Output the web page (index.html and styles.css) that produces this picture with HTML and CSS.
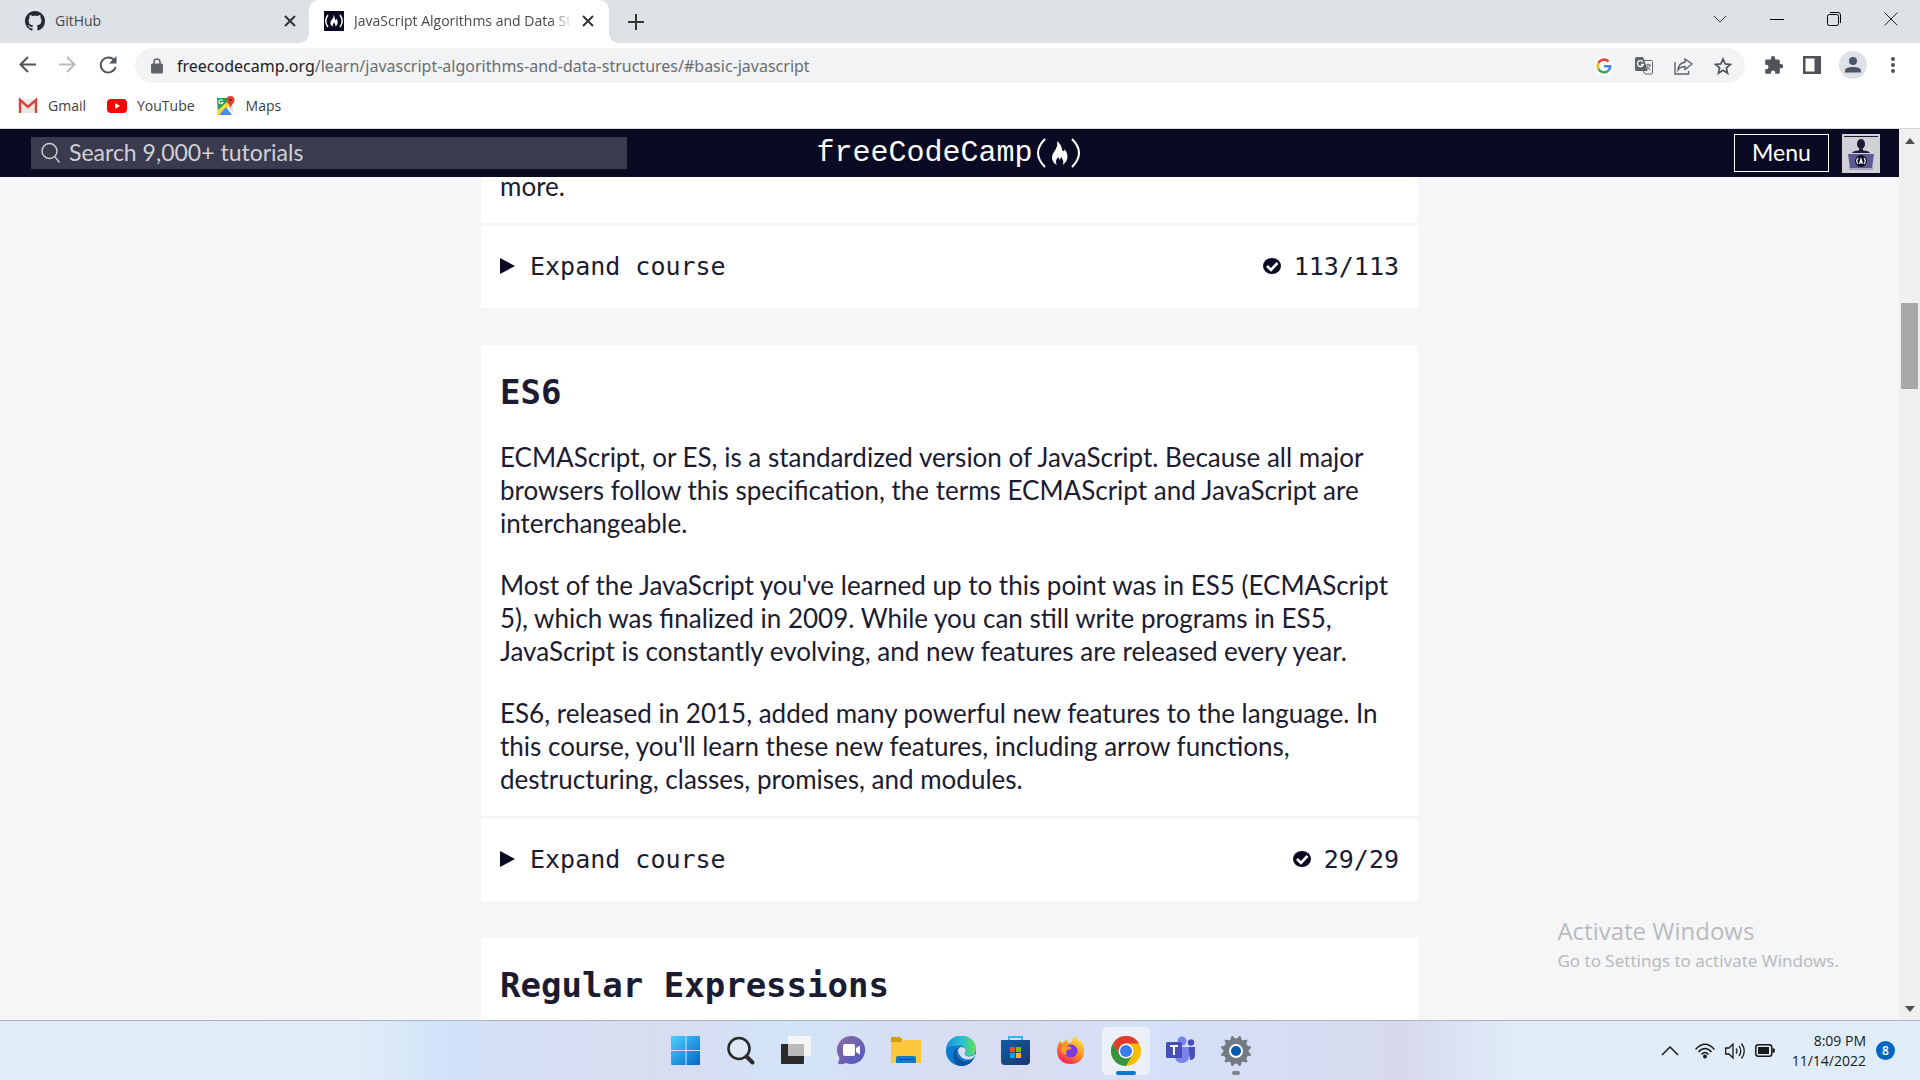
FILE: index.html
```html
<!DOCTYPE html>
<html lang="en">
<head>
<meta charset="utf-8">
<title>JavaScript Algorithms and Data Structures</title>
<link rel="stylesheet" href="styles.css">
</head>
<body>
<div class="screen">
  <div class="tabstrip">
    <div class="tab">
      <svg class="ico20" viewBox="0 0 16 16" fill="#24292f"><path d="M8 0C3.58 0 0 3.58 0 8c0 3.54 2.29 6.53 5.47 7.59.4.07.55-.17.55-.38 0-.19-.01-.82-.01-1.49-2.01.37-2.53-.49-2.69-.94-.09-.23-.48-.94-.82-1.13-.28-.15-.68-.52-.01-.53.63-.01 1.08.58 1.23.82.72 1.21 1.87.87 2.33.66.07-.52.28-.87.51-1.07-1.78-.2-3.64-.89-3.64-3.95 0-.87.31-1.59.82-2.15-.08-.2-.36-1.02.08-2.12 0 0 .67-.21 2.2.82.64-.18 1.32-.27 2-.27s1.36.09 2 .27c1.53-1.04 2.2-.82 2.2-.82.44 1.1.16 1.92.08 2.12.51.56.82 1.27.82 2.15 0 3.07-1.87 3.75-3.65 3.95.29.25.54.73.54 1.48 0 1.07-.01 1.93-.01 2.2 0 .21.15.46.55.38A8.01 8.01 0 0 0 16 8c0-4.42-3.58-8-8-8z"/></svg>
      <span class="tab-title">GitHub</span>
      <button class="plain" aria-label="Close tab"><svg width="12" height="12" viewBox="0 0 12 12" stroke="#333" stroke-width="2"><path d="M1 1l10 10M11 1L1 11"/></svg></button>
    </div>
    <div class="tab tab-active">
      <svg class="ico20" viewBox="0 0 20 20"><path fill="#0a0a23" d="M0 0h20v20H0z"/><path fill="none" stroke="#fff" stroke-width="1.4" d="M4 4Q-.5 10 4 16M16 4q4.500 6 0 12"/><path fill="#fff" d="M9.500 4c2 2 .5 4 2.200 5 .6-.5.500-1 .500-1.500 1.800 2 2.400 6-.9 8 .5-2-.5-3-1.300-4-.8 1.500-1.600 2-1 4-4-2-2.600-5-1-7 1.200-1.500 1.700-2.500 1.500-4.500z"/></svg>
      <span class="tab-title fade">JavaScript Algorithms and Data Structures</span>
      <button class="plain" aria-label="Close tab"><svg width="12" height="12" viewBox="0 0 12 12" stroke="#333" stroke-width="2"><path d="M1 1l10 10M11 1L1 11"/></svg></button>
    </div>
    <button class="plain newtab" aria-label="New tab"><svg width="16" height="16" viewBox="0 0 16 16" stroke="#333" stroke-width="2"><path d="M8 0v16M0 8h16"/></svg></button>
    <div class="winctl">
      <button class="plain" aria-label="Search tabs"><svg width="14" height="14" viewBox="0 0 14 14" fill="none" stroke="#333"><path d="M1 4l6 6 6-6"/></svg></button>
      <button class="plain" aria-label="Minimize"><svg width="14" height="14" viewBox="0 0 14 14" stroke="#000"><path d="M0 7.500h14"/></svg></button>
      <button class="plain" aria-label="Restore"><svg width="14" height="14" viewBox="0 0 14 14" fill="none" stroke="#000"><rect x=".5" y="2.500" width="11" height="11" rx="2"/><path d="M3 .5h8q2.500 0 2.500 2.500v8"/></svg></button>
      <button class="plain" aria-label="Close"><svg width="14" height="14" viewBox="0 0 14 14" stroke="#222"><path d="M.5.5l13 13M13.500.5l-13 13"/></svg></button>
    </div>
  </div>

  <div class="toolbar">
    <button class="plain" aria-label="Back"><svg width="17" height="17" viewBox="0 0 17 17" fill="none" stroke="#505357" stroke-width="2"><path d="M17 8.500H2M9 1L1.500 8.500 9 16"/></svg></button>
    <button class="plain" aria-label="Forward"><svg width="17" height="17" viewBox="0 0 17 17" fill="none" stroke="#b9bbbe" stroke-width="2"><path d="M0 8.500h15M8 1l7.500 7.500L8 16"/></svg></button>
    <button class="plain" aria-label="Reload"><svg width="18" height="18" viewBox="0 0 18 18" fill="none" stroke="#505357" stroke-width="2"><path d="M15.500 4.800A7.500 7.500 0 1 0 16.500 11"/><path fill="#505357" stroke="none" d="M17.500 0v7.500H10z"/></svg></button>
    <div class="omnibox">
      <svg width="12" height="16" viewBox="0 0 12 16"><path fill="#5f6368" d="M1.500 5.500h9Q12 5.500 12 7v7q0 1.500-1.500 1.500h-9Q0 15.500 0 14V7q0-1.500 1.500-1.500z"/><path fill="none" stroke="#5f6368" stroke-width="1.600" d="M3 6V4a3 3 0 0 1 6 0v2"/></svg>
      <div class="url"><span class="host">freecodecamp.org</span>/learn/javascript-algorithms-and-data-structures/#basic-javascript</div>
      <svg width="20" height="20" viewBox="0 0 20 20" fill="none" stroke-width="2.600"><circle cx="10" cy="10" r="10" fill="#fff"/><path stroke="#ea4335" d="M4.500 7A6.300 6.300 0 0 1 14.500 5.500"/><path stroke="#fbbc05" d="M4.500 7a6.300 6.300 0 0 0 0 6"/><path stroke="#34a853" d="M4.500 13a6.300 6.300 0 0 0 9.700 1.700"/><path stroke="#4285f4" d="M14.200 14.700A6 6 0 0 0 16.200 10.300H10"/></svg>
      <svg width="18" height="18" viewBox="0 0 18 18"><path fill="#5f6368" d="M1.500 0H8l1.500 3.500 3 10.500h-11Q0 14 0 12.500v-11Q0 0 1.500 0z"/><path fill="none" stroke="#5f6368" d="M9 3.500h7.500q1 0 1 1v11.500q0 1-1 1H10L8.500 14M10.500 8H16M13 6.500V8m2 0q-.5 3-3.500 5m0-4q1.500 3 4 4"/><path fill="none" stroke="#fff" stroke-width="1.300" d="M8 5a3 3 0 1 0 .3 2.500H6"/></svg>
      <svg width="19" height="18" viewBox="0 0 19 18" fill="none" stroke="#5f6368" stroke-width="1.400"><path d="M1 5v12h13.500v-3M11 2l7 5-7 5.500V9.500Q6.500 9.500 4 13q.5-7 7-7.800z"/></svg>
      <svg width="18" height="18" viewBox="0 0 18 18" fill="none" stroke="#505357" stroke-width="1.700"><path d="M9 2l2.100 4.900 5.300.5-4 3.500 1.200 5.200L9 13.300l-4.600 2.800 1.200-5.200-4-3.500 5.300-.5z"/></svg>
    </div>
    <div class="actions">
      <svg width="18" height="18" viewBox="0 0 18 18" fill="#505357"><path d="M1.500 3.500H6V2.200a2 2 0 0 1 4.200 0v1.300h3.300q1.300 0 1.300 1.300V8H16a2 2 0 0 1 0 4.300h-1.200v4.200q0 1.300-1.300 1.300h-3.200v-1a2.200 2.200 0 0 0-4.400 0v1H1.500Q.2 17.800.2 16.500v-3.200h1a2.300 2.300 0 0 0 0-4.600h-1V4.800q0-1.300 1.300-1.300z"/></svg>
      <svg width="18" height="18" viewBox="0 0 18 18"><path fill="#505357" d="M0 0h18v18H0z"/><path fill="#fff" d="M2.500 2.500h9v13h-9z"/></svg>
      <svg class="profile" width="28" height="28" viewBox="0 0 28 28"><circle cx="14" cy="14" r="14" fill="#dee1e6"/><g fill="#48566a"><circle cx="14" cy="10" r="4"/><path d="M6 21.500v-2q0-3.500 8-3.500t8 3.500v2z"/></g></svg>
      <svg width="4" height="16" viewBox="0 0 4 16" fill="#505357"><circle cx="2" cy="2" r="2"/><circle cx="2" cy="8" r="2"/><circle cx="2" cy="14" r="2"/></svg>
    </div>
  </div>

  <div class="bookmarks">
    <a href="#gmail"><svg width="20" height="20" viewBox="0 0 20 20"><path fill="#e8e8e8" d="M1 3h18v14H1z"/><path fill="none" stroke="#db4437" stroke-width="2.400" d="M2 17V4l8 7 8-7v13"/></svg>Gmail</a>
    <a href="#youtube"><svg width="20" height="20" viewBox="0 0 20 20"><rect x="0" y="3" width="20" height="14" rx="4" fill="#f00"/><path fill="#fff" d="M8 7l5 3-5 3z"/></svg>YouTube</a>
    <a href="#maps"><svg width="20" height="20" viewBox="0 0 20 20"><path fill="#1e9e57" d="M1 2h15L2 17z"/><path fill="#e0e0e0" d="M16 6l2 12-7-8z"/><path fill="#fdd835" d="M1 15L13 4l2 4L3 19H1z"/><path fill="#4a8af4" d="M3 19l7-8 6 8z"/><path fill="#e04436" d="M14.500 0A4 4 0 0 1 18.500 4c0 3-3 4-4 8-1-4-4-5-4-8a4 4 0 0 1 4-4z"/><circle cx="14.500" cy="4" r="1.300" fill="#7b231c"/><path fill="none" stroke="#fff" stroke-width="1.200" d="M6.500 4.500a2 2 0 1 0 .3 2H5"/></svg>Maps</a>
  </div>

  <div class="viewport">
    <div class="page">
      <header class="sitenav">
        <label class="search">
          <svg width="19" height="22" viewBox="0 0 19 22" fill="none" stroke="#d0d0d5" stroke-width="1.400"><circle cx="8.500" cy="9" r="7.500"/><path d="M14 15l4.500 5.500"/></svg>
          <input type="text" placeholder="Search 9,000+ tutorials" aria-label="Search tutorials">
        </label>
        <a class="logo" href="#home">freeCodeCamp<svg width="50" height="32" viewBox="-2 0 50 32"><path fill="none" stroke="#fff" stroke-width="2" d="M10 2Q-4 16 10 30M37 2q14 14 0 28"/><path fill="#fff" d="M22 4c6 5 4 8 6 10 1.500.5 1.500-1 1.500-2 4 5 4.500 12-2 16 2-4 0-5-1-8-1.500 1-1 2-1.500 3-1-1-1.500-2-1.500-3-3 3-3 5-1.500 8-6-3-6-9-3-13 2-3 4-6 3-11z"/></svg></a>
        <div class="navright">
          <button class="menu">Menu</button>
          <svg width="38" height="39" viewBox="0 0 38 39"><path fill="#d0d0d5" d="M0 0h38v39H0z"/><path fill="#1b1b32" d="M2 2h34v1H2z"/><g fill="#1e1b3a"><ellipse cx="19" cy="10" rx="4" ry="5"/><path d="M10 19q1-2.500 7-2.500v-2h4v2q6 0 7 2.500z"/></g><path fill="#a9a8c8" d="M7 32h24v4H7z"/><path fill="#5b5a94" d="M6 20h26l-2 14H8z"/><circle cx="19" cy="27" r="6" fill="#0a0a23"/><path fill="none" stroke="#fff" stroke-width="1.200" d="M16 24q-2.500 3 0 6M22 24q2.500 3 0 6M17.500 30l1.500-5 1.500 5M18 28.500h2"/></svg>
        </div>
      </header>
      <main class="courses">
        <section class="card">
          <div class="intro intro-tail"><p>more.</p></div>
          <button class="expand"><svg class="tri" viewBox="0 0 15 16"><path d="M0 0l15 8-15 8z"/></svg><span>Expand course</span><svg class="check" viewBox="0 0 18 16"><ellipse cx="9" cy="8" rx="9" ry="8"/><path fill="none" stroke="#fff" stroke-width="2.600" d="M4 8l4 4 6.500-7"/></svg><span>113/113</span></button>
        </section>
        <section class="card">
          <div class="intro">
            <h2>ES6</h2>
            <p>ECMAScript, or ES, is a standardized version of JavaScript. Because all major browsers follow this specification, the terms ECMAScript and JavaScript are interchangeable.</p>
            <p>Most of the JavaScript you've learned up to this point was in ES5 (ECMAScript 5), which was finalized in 2009. While you can still write programs in ES5, JavaScript is constantly evolving, and new features are released every year.</p>
            <p>ES6, released in 2015, added many powerful new features to the language. In this course, you'll learn these new features, including arrow functions, destructuring, classes, promises, and modules.</p>
          </div>
          <button class="expand"><svg class="tri" viewBox="0 0 15 16"><path d="M0 0l15 8-15 8z"/></svg><span>Expand course</span><svg class="check" viewBox="0 0 18 16"><ellipse cx="9" cy="8" rx="9" ry="8"/><path fill="none" stroke="#fff" stroke-width="2.600" d="M4 8l4 4 6.500-7"/></svg><span>29/29</span></button>
        </section>
        <section class="card">
          <div class="intro"><h2>Regular Expressions</h2></div>
        </section>
      </main>
    </div>
    <div class="scrollbar">
      <svg width="10" height="6" viewBox="0 0 10 6" fill="#505050"><path d="M5 0l5 6H0z"/></svg>
      <div class="thumb"></div>
      <svg width="10" height="6" viewBox="0 0 10 6" fill="#505050"><path d="M5 6l5-6H0z"/></svg>
    </div>
    <div class="watermark"><div class="wm-title">Activate Windows</div><div class="wm-sub">Go to Settings to activate Windows.</div></div>
  </div>

  <footer class="taskbar">
    <div class="apps">
      <button class="app" aria-label="Start"><svg viewBox="0 0 30 30"><defs><linearGradient id="w" x2="1" y2="1"><stop stop-color="#4cd0fb"/><stop offset="1" stop-color="#0067c8"/></linearGradient></defs><path fill="url(#w)" d="M1 0h13.500v14H0V1q0-1 1-1zM15.500 0H28q1 0 1 1v13H15.500zM0 15h14.500v14H1q-1 0-1-1zM15.500 15H29v13q0 1-1 1H15.500z"/></svg></button>
      <button class="app" aria-label="Search"><svg viewBox="0 0 30 30" fill="none" stroke="#2b2b2b"><circle cx="13" cy="12.500" r="10.500" fill="#dfe8f5" stroke-width="2.600"/><path stroke-width="4" stroke-linecap="round" d="M20.500 20.500l6 6"/></svg></button>
      <button class="app" aria-label="Task view"><svg viewBox="0 0 30 30"><rect y="8" width="23" height="20" rx="1" fill="#2a2a2a"/><rect x="7" width="23" height="20" rx="1" fill="#f4f4f4"/><path fill="#b9b9b9" d="M7 8h16v12H7z"/></svg></button>
      <button class="app" aria-label="Chat"><svg viewBox="0 0 30 30"><defs><linearGradient id="c" x2="1" y2="1"><stop stop-color="#8c6a9e"/><stop offset="1" stop-color="#5059c9"/></linearGradient></defs><path fill="url(#c)" d="M15 0a14 14 0 1 1-5 27q-2 1.500-8 1l1.500-6A14 14 0 0 1 15 0z"/><rect x="7" y="8" width="12" height="12" rx="2" fill="#fff"/><path fill="#fff" d="M20 12l4-2.500v9L20 16z"/></svg></button>
      <button class="app" aria-label="File Explorer"><svg viewBox="0 0 30 30"><path fill="#d99a0b" d="M0 2q0-1 1-1h8l3 3h-1v5H0z"/><path fill="#fdc93c" d="M0 6h10l3-2h17v22q0 1-1 1H0z"/><path fill="#0f78d0" d="M5 27v-5q0-2 2-2h16q2 0 2 2v5z"/><path stroke="#0b4f93" d="M8 23.500h14"/></svg></button>
      <button class="app" aria-label="Edge"><svg viewBox="0 0 30 30"><defs><linearGradient id="e" x2="1"><stop stop-color="#1c8fdc"/><stop offset=".55" stop-color="#2bc3cf"/><stop offset="1" stop-color="#63e04c"/></linearGradient></defs><circle cx="15" cy="15" r="15" fill="#0d7bd0"/><path fill="url(#e)" d="M0 13C2-5 29-4 30 12c0 5-3 8-7 8s-6-2-4-4c2-6-6-8-9-6Q4 9 0 13z"/><path fill="#0c539f" d="M12 11c-4 6 0 16 10 14q4-1 6-3c-3 6-9 9-14 8-8-2-9-14-2-19z"/><path fill="#dbe1f3" d="M16 11q5 1 3 5-2 3 3 4.500 4 .5 8-3-2 6-8 6c-6 0-10-5-10-9q1-4 4-3.500z"/></svg></button>
      <button class="app" aria-label="Store"><svg viewBox="0 0 30 30"><defs><linearGradient id="s" x2="1" y2="1"><stop stop-color="#0f5ea8"/><stop offset="1" stop-color="#1b3766"/></linearGradient></defs><path fill="none" stroke="#2fc0f3" stroke-width="2" d="M8 6V1h13v5"/><path fill="url(#s)" d="M0 4h29v21q0 4-4 4H4q-4 0-4-4z"/><path fill="#f25022" d="M9 11h5v5H9z"/><path fill="#7fba00" d="M15 11h5v5h-5z"/><path fill="#00a4ef" d="M9 17h5v5H9z"/><path fill="#ffb900" d="M15 17h5v5h-5z"/></svg></button>
      <button class="app" aria-label="Firefox"><svg viewBox="0 0 30 30"><defs><linearGradient id="f" x1=".8" x2=".2" y2="1"><stop stop-color="#ffe84a"/><stop offset=".5" stop-color="#ff8a1f"/><stop offset="1" stop-color="#f0156b"/></linearGradient></defs><path fill="url(#f)" d="M4 5q1 2 3 2 2-3 4-4 0 3 2 4l3-1q0-4 3-6 2 3 4 5l1-1c8 10 4 24-9 24-14 0-17-13-11-23z"/><circle cx="15" cy="15" r="6.500" fill="#7a3be0"/><path fill="#ff9d22" d="M5 12q5-4 11 0-2 2-5 2-2 2 0 5-6-1-6-7z"/></svg></button>
      <button class="app app-active" aria-label="Chrome"><svg viewBox="0 0 30 30"><circle cx="15" cy="15" r="15" fill="#fbbc05"/><path fill="#e33b2e" d="M15 15L8.500 18.800 2 7.500A15 15 0 0 1 28 7.500H15z"/><path fill="#34953f" d="M2 7.500A15 15 0 0 0 15 30l6.500-11.200L15 15 8.500 18.800z"/><circle cx="15" cy="15" r="7.500" fill="#fff"/><circle cx="15" cy="15" r="6" fill="#347df0"/></svg></button>
      <button class="app" aria-label="Teams"><svg viewBox="0 0 30 30"><circle cx="25" cy="6.500" r="3.200" fill="#4a4fb8"/><circle cx="16" cy="5" r="4.500" fill="#7b83eb"/><path fill="#4a4fb8" d="M22 11h7v8q0 5-5 5z"/><path fill="#7b83eb" d="M9 11h14v9q0 7-7 7t-7-7z"/><rect y="6" width="16" height="16" rx="1.500" fill="#464eb8"/><path fill="none" stroke="#fff" stroke-width="2" d="M4 10h8M8 10v9"/></svg></button>
      <button class="app app-open" aria-label="Settings"><svg viewBox="0 0 30 30"><g fill="#727b83"><circle cx="15" cy="15" r="11.500"/><path id="t" d="M10.500 0H12q1 2.500 3 2.500T18 0h1.500l2 6h-13z" transform="rotate(0 15 15)"/><use href="#t" transform="rotate(60 15 15)"/><use href="#t" transform="rotate(120 15 15)"/><use href="#t" transform="rotate(180 15 15)"/><use href="#t" transform="rotate(240 15 15)"/><use href="#t" transform="rotate(300 15 15)"/></g><circle cx="15" cy="15" r="7" fill="#fff"/><circle cx="15" cy="15" r="5" fill="#0a5bab"/></svg></button>
    </div>
    <div class="tray">
      <svg width="18" height="10" viewBox="0 0 18 10" fill="none" stroke="#1a1a1a" stroke-width="1.500"><path d="M1 9l8-8 8 8"/></svg>
      <svg class="wifi" width="20" height="16" viewBox="0 0 20 16" fill="none" stroke="#1a1a1a" stroke-width="1.500"><path d="M.5 6.500Q10-4 19.500 6.500M3.500 9Q10 2 16.500 9M6.500 11.500Q10 7.500 13.500 11.500"/><circle cx="10" cy="13.500" r="1.200" fill="#1a1a1a"/></svg>
      <svg width="20" height="18" viewBox="0 0 20 18" fill="none" stroke="#1a1a1a" stroke-width="1.300"><path d="M.7 6h3.300l4-4v14l-4-4H.7zM11 6.500q2 2.500 0 5M14 4q3.500 5 0 10M16.500 1.500q5.500 7.500 0 15"/></svg>
      <svg width="20" height="13" viewBox="0 0 20 13"><rect x=".8" y=".8" width="16" height="11.400" rx="2.500" fill="none" stroke="#1a1a1a" stroke-width="1.500"/><path fill="#1a1a1a" d="M3 3h11v7H3zM17.500 4q2.500 0 2.500 2.500T17.500 9z"/></svg>
      <div class="clock"><div>8:09 PM</div><div>11/14/2022</div></div>
      <span class="badge">8</span>
    </div>
  </footer>
</div>
</body>
</html>
```
FILE: styles.css
```css
* { box-sizing: border-box; }
body { margin: 0; font-family: "Open Sans", sans-serif; }
svg { display: block; flex: none; }
button { font: inherit; color: inherit; }
.screen { display: flex; flex-direction: column; height: 100vh; overflow: hidden; background: #fff; }
.plain { display: flex; padding: 0; border: 0; background: none; }

.tabstrip { display: flex; align-items: center; height: 43px; background: #dee1e6; flex: none; }
.tab { display: flex; align-items: center; width: 309px; height: 43px; padding: 0 13px 2px 25px; gap: 10px; font-size: 14px; color: #45484c; }
.tab-active { position: relative; width: 300px; padding: 0 15px 2px; border-radius: 10px 10px 0 0; background: #fff; }
.tab-active::before, .tab-active::after { content: ""; position: absolute; bottom: 0; width: 10px; height: 10px; }
.tab-active::before { right: 100%; background: radial-gradient(circle at 0 0, #dee1e6 10px, #fff 10px); }
.tab-active::after { left: 100%; background: radial-gradient(circle at 100% 0, #dee1e6 10px, #fff 10px); }
.ico20 { width: 20px; height: 20px; }
.tab-title { flex: 1; min-width: 0; overflow: hidden; white-space: nowrap; }
.fade { mask-image: linear-gradient(to right, #000 90%, transparent); }
.newtab { margin-left: 19px; }
.winctl { display: flex; gap: 43px; margin: -6px 22px 0 auto; }

.toolbar { display: flex; align-items: center; gap: 23px; height: 45px; padding: 0 25px 2px 19px; flex: none; }
.omnibox { display: flex; align-items: center; gap: 21px; flex: 1; height: 35px; margin: 2px -3px 0 -5px; padding: 0 13px 0 16px; border-radius: 18px; background: #f1f3f4; }
.url { flex: 1; margin-left: -7px; font-family: "Noto Sans", sans-serif; font-size: 16px; color: #6a6d71; white-space: nowrap; }
.host { color: #202124; }
.actions { display: flex; align-items: center; gap: 20px; }
.profile { margin: 0 4px 0 -2px; }

.bookmarks { display: flex; gap: 21px; height: 41px; padding: 0 18px; border-bottom: 1px solid #d5d7da; flex: none; }
.bookmarks a { display: flex; align-items: center; gap: 10px; height: 35px; font-size: 14px; color: #3c4043; text-decoration: none; }

.viewport { position: relative; display: flex; flex: 1; min-height: 0; }
.page { display: flex; flex-direction: column; flex: 1; min-width: 0; overflow: hidden; background: #f5f6f7; font-family: Lato, sans-serif; font-size: 26px; }
.sitenav { position: relative; display: grid; grid-template-columns: 1fr auto 1fr; align-items: center; height: 48px; padding: 0 19px; background: #0a0a23; color: #fff; font-size: 23px; flex: none; }
.search { display: flex; align-items: center; gap: 9px; width: 596px; height: 32px; margin-left: 12px; padding: 0 10px; background: #3b3b4f; }
.search input { flex: 1; min-width: 0; padding: 0 0 2px; border: 0; outline: 0; background: none; font: inherit; color: #d0d0d5; }
.search input::placeholder { color: #d0d0d5; opacity: 1; }
.logo { display: flex; align-items: center; color: #fff; font-family: "Liberation Mono", monospace; font-size: 30px; line-height: 32px; text-decoration: none; }
.navright { display: flex; justify-content: flex-end; align-items: center; gap: 13px; }
.menu { width: 95px; height: 38px; padding: 0 0 2px; border: 1px solid #fff; background: #0a0a23; color: #fff; }

.courses { display: flex; flex-direction: column; gap: 37px; width: min(937px, 100%); margin: 0 auto; color: #1b1b32; }
.card { background: #fff; flex: none; }
.intro { padding: 27px 19px 20px; border-bottom: 3px solid #f5f6f7; }
.intro-tail { margin-top: -7px; padding-top: 0; }
.intro h2 { margin: 0 0 29px; font: bold 34px/40px "DejaVu Sans Mono", monospace; }
.intro p { margin: 0 0 29px; line-height: 33px; }
.intro p:last-child { margin: 0; }
.expand { display: flex; align-items: center; width: 100%; height: 82px; padding: 0 19px 2px; border: 0; background: #fff; font-family: "DejaVu Sans Mono", monospace; font-size: 25px; }
.expand svg { fill: #0a0a23; }
.tri { width: 15px; height: 16px; margin-right: 15px; }
.check { width: 18px; height: 16px; margin: 0 13px 0 auto; }

.scrollbar { display: flex; flex-direction: column; align-items: center; width: 21px; padding: 9px 0 8px; background: #f0f0f0; flex: none; }
.thumb { width: 17px; height: 86px; margin: 159px 0 auto; background: #a8a8a8; }
.watermark { position: absolute; right: 81px; bottom: 46px; color: #b9bbbd; }
.wm-title { font-size: 24px; line-height: 34px; }
.wm-sub { font-family: "Noto Sans", sans-serif; font-size: 17px; line-height: 26px; }

.taskbar { display: grid; grid-template-columns: 1fr auto 1fr; align-items: center; height: 60px; padding-left: 2px; border-top: 1px solid #a9b3c2; background: linear-gradient(90deg, #e1eef8, #e1edf6 18%, #d3e2f9 23%, #d8dcf0 34%, #d3e3f8 41%, #d8dcf0 53%, #d4e1f8 60%, #d7daee 73%, #e0edf8 79%); flex: none; }
.apps { grid-column: 2; display: flex; gap: 7px; }
.app { position: relative; display: grid; place-items: center; width: 48px; height: 48px; padding: 0; border: 0; border-radius: 5px; background: none; }
.app svg { width: 30px; height: 30px; }
.app-active { background: #ecf0f8; }
.app-active::after, .app-open::after { content: ""; position: absolute; bottom: 0; left: 14px; width: 20px; height: 4px; border-radius: 2px; background: #0078d4; }
.app-open::after { left: 20px; width: 8px; background: #7e858f; }
.tray { display: flex; align-items: center; justify-content: flex-end; gap: 10px; padding-right: 25px; color: #1a1a1a; }
.wifi { margin-left: 6px; }
.clock { margin-left: 7px; font-size: 14px; line-height: 20px; text-align: right; }
.badge { width: 19px; height: 19px; border-radius: 50%; background: #0067c0; color: #fff; font-size: 12px; font-weight: 600; line-height: 19px; text-align: center; }
```
